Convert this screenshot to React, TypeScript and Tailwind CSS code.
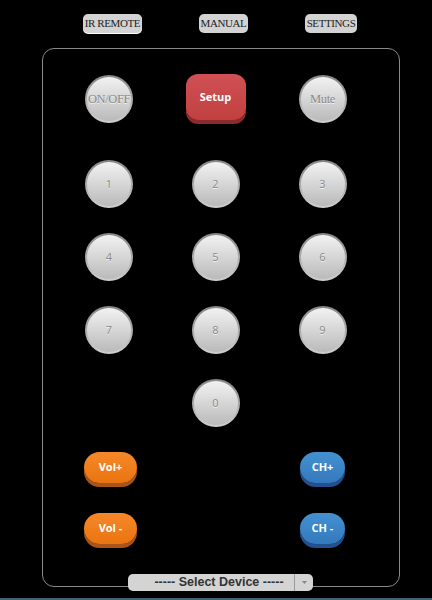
import React from "react"

const serif = { fontFamily: '"Liberation Serif", "Times New Roman", serif' }
const sans = { fontFamily: '"Open Sans", "DejaVu Sans", sans-serif' }

function NavButton({ label, w, active }: { label: string; w: string; active?: boolean }) {
  return (
    <button
      style={serif}
      className={`${w} h-[19px] rounded-[5px] bg-[#d3d3d3] text-[11px] tracking-[-0.4px] leading-[19px] text-[#222] text-center whitespace-nowrap ${
        active ? "shadow-[0_1px_0_#ffffff]" : ""
      }`}
    >
      {label}
    </button>
  )
}

function Round({ label, font = "sans" }: { label: string; font?: "sans" | "serif" }) {
  return (
    <div className="w-[48px] h-[48px] rounded-full p-[2px] bg-[linear-gradient(to_bottom,#858585,#d0d0d0)]">
      <div
        style={font === "serif" ? serif : sans}
        className={`w-full h-full rounded-full flex items-center justify-center bg-[linear-gradient(to_bottom,#f2f2f2,#bababa)] text-[#8a8a8a] ${
          font === "serif" ? "text-[12.5px] tracking-[-0.4px]" : "text-[11px]"
        } [text-shadow:0_1px_0_#f0f0f0]`}
      >
        {label}
      </div>
    </div>
  )
}

function Pill({ label, w, color }: { label: string; w: string; color: "orange" | "blue" }) {
  const c =
    color === "orange"
      ? "bg-[linear-gradient(to_bottom,#f6882a,#ea7410)] shadow-[0_4px_0_#a9541c]"
      : "bg-[linear-gradient(to_bottom,#4391d0,#3479bd)] shadow-[0_4px_0_#23508f]"
  return (
    <div
      style={sans}
      className={`${w} h-[31px] rounded-full ${c} flex items-center justify-center text-white text-[11px] font-bold`}
    >
      {label}
    </div>
  )
}

export default function App() {
  return (
    <div className="w-[432px] h-[600px] bg-black flex flex-col overflow-hidden">
      {/* top nav */}
      <div className="flex pt-[14px] pl-[83px] gap-[57px]">
        <NavButton label="IR REMOTE" w="w-[59px]" active />
        <NavButton label="MANUAL" w="w-[49px]" />
        <NavButton label="SETTINGS" w="w-[52px]" />
      </div>

      {/* remote panel */}
      <div className="ml-[42px] mt-[15px] w-[358px] h-[539px] rounded-[12px] border border-[#8a8a8a]">
        <div className="grid grid-cols-[106px_107px_107px] justify-items-center w-[320px] ml-[13px] pt-[26px]">
          <Round label="ON/OFF" font="serif" />
          <div
            className="w-[60px] h-[46px] rounded-[12px] bg-[linear-gradient(to_bottom,#d05055,#c1403f)] shadow-[0_4px_0_#8c2b2d] flex items-center justify-center text-white text-[11px] font-bold -mt-[1px]"
            style={sans}
          >
            Setup
          </div>
          <Round label="Mute" font="serif" />
        </div>

        <div className="grid grid-cols-[106px_107px_107px] justify-items-center w-[320px] ml-[13px] mt-[37px] gap-y-[25px]">
          {["1", "2", "3", "4", "5", "6", "7", "8", "9"].map((n) => (
            <Round key={n} label={n} />
          ))}
          <div />
          <Round label="0" />
          <div />
        </div>

        <div className="grid grid-cols-[106px_107px_107px] justify-items-center w-[320px] ml-[13px] mt-[25px] gap-y-[30px]">
          <div className="ml-[3px]"><Pill label="Vol+" w="w-[53px]" color="orange" /></div>
          <div />
          <Pill label="CH+" w="w-[45px]" color="blue" />
          <div className="ml-[3px]"><Pill label="Vol -" w="w-[53px]" color="orange" /></div>
          <div />
          <Pill label="CH -" w="w-[45px]" color="blue" />
        </div>
      </div>

      {/* device select, overlapping panel edge */}
      <div className="relative -mt-[13px] ml-[128px] w-[185px] h-[17px] rounded-[5px] bg-[#d4d4d4] flex items-center">
        <div
          className="flex-1 text-center text-[12.5px] font-bold text-[#333] leading-[17px] pl-[16px]"
          style={{ fontFamily: '"Liberation Sans", Arial, sans-serif' }}
        >
          ----- Select Device -----
        </div>
        <div className="w-[19px] h-full border-l border-[#9a9a9a] flex items-center justify-center">
          <svg width="5" height="3" viewBox="0 0 5 3">
            <path d="M0 0 L5 0 L2.5 3 Z" fill="#888" />
          </svg>
        </div>
      </div>

      <div className="mt-auto h-[2px] bg-[#3f6478]" />
    </div>
  )
}
